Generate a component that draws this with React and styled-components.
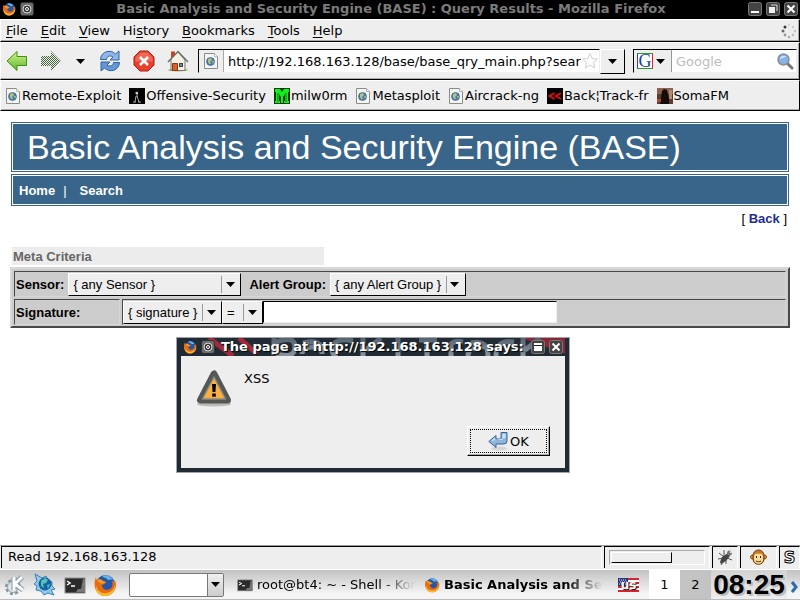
import React, { useState } from "react";
import styled, { createGlobalStyle } from "styled-components";

const menus = [
  { pre: "", key: "F", post: "ile" },
  { pre: "", key: "E", post: "dit" },
  { pre: "", key: "V", post: "iew" },
  { pre: "Hi", key: "s", post: "tory" },
  { pre: "", key: "B", post: "ookmarks" },
  { pre: "", key: "T", post: "ools" },
  { pre: "", key: "H", post: "elp" },
];

const PageIcon = () => (
  <svg width="16" height="16" viewBox="0 0 16 16">
    <path d="M1.5 .5h10l3 3v12h-13z" fill="#f4f5f2" stroke="#8a8d86" />
    <path d="M11.5 .5v3h3" fill="#fff" stroke="#b5b7b2" />
    <circle cx="7.5" cy="8.5" r="4" fill="#4a79b8" stroke="#315a91" strokeWidth=".6" />
    <path d="M5 6l3-1 1 2-2 2 1 2-2 0-1-2zM9 8l2 0-1 3z" fill="#b5c66a" />
  </svg>
);

const OffsecIcon = () => (
  <svg width="16" height="16" viewBox="0 0 16 16">
    <rect width="16" height="16" fill="#000" />
    <path d="M8 4v5M6 5h3M7 8l-1 6M8 8l2 6M4 14h3M9 14h3" stroke="#aaa" fill="none" />
    <circle cx="8" cy="5" r="1.2" fill="#ccc" />
  </svg>
);

const MilwormIcon = () => (
  <svg width="16" height="16" viewBox="0 0 16 16">
    <rect width="16" height="16" fill="#053a05" />
    <path d="M1 1h5l2 3 2-3h5v3h-1v9h1v2h-5v-2h1V6L9 9v6H7V9L5 6v7h1v2H1v-2h1V4H1z" fill="#12f01c" />
    <path d="M4 5v9M12 5v9" stroke="#0b7d10" />
  </svg>
);

const BacktrackIcon = () => (
  <svg width="16" height="16" viewBox="0 0 16 16">
    <rect width="16" height="16" fill="#000" />
    <path d="M7.5 5L2.5 8l5 3M14 5L9 8l5 3" fill="none" stroke="#e30b12" strokeWidth="2" />
  </svg>
);

const SomaIcon = () => (
  <svg width="16" height="16" viewBox="0 0 16 16">
    <rect width="16" height="16" fill="#5b3a30" />
    <rect width="16" height="6" fill="#8d6252" />
    <rect x="12" y="2" width="3" height="9" fill="#b08a72" />
    <path d="M5 3l2-2 3 1 1 4 1 4v6H3l1-6z" fill="#150c0a" />
    <rect x="0" y="11" width="4" height="3" fill="#a3512d" />
  </svg>
);

const bookmarks = [
  { name: "Remote-Exploit", Icon: PageIcon },
  { name: "Offensive-Security", Icon: OffsecIcon },
  { name: "milw0rm", Icon: MilwormIcon },
  { name: "Metasploit", Icon: PageIcon },
  { name: "Aircrack-ng", Icon: PageIcon },
  { name: "Back¦Track-fr", Icon: BacktrackIcon },
  { name: "SomaFM", Icon: SomaIcon },
];

const FirefoxIcon = ({ size = 16 }) => (
  <svg width={size} height={size} viewBox="0 0 24 24">
    <circle cx="12.5" cy="11.5" r="9.5" fill="#2457a6" />
    <path d="M9 3c4-2 9 0 11 4-2-1-3 0-5 0-1-2-4-2-6-4z" fill="#69b5ea" />
    <path d="M3 4c0 2 1 3 1 3 2-1 4-1 6 1l3 1c0 2-3 2-4 3 0 4 4 6 8 4 3-2 3-5 2-8 3 1 3 0 3-1 3 7-1 16-10 16C4 23-1 14 3 4z" fill="#e66b12" />
    <path d="M3 12c1 6 6 9 11 8 4-1 7-3 8-8 1 6-4 11-10 11C6 23 2 18 3 12z" fill="#f8b92c" />
    <path d="M4 7c2-1 4-1 6 1l3 1c-1 1-3 1-4 2-2-1-4-2-5-4z" fill="#f39a26" />
  </svg>
);

const PinIcon = () => (
  <svg width="14" height="14" viewBox="0 0 14 14">
    <rect x=".5" y=".5" width="13" height="13" rx="2" fill="#6b6b6b" stroke="#333" />
    <circle cx="7" cy="7" r="4" fill="#333" stroke="#ddd" />
    <circle cx="7" cy="7" r="1.5" fill="none" stroke="#fff" />
  </svg>
);

const WindowIcon = ({ kind }) => (
  <svg width="14" height="14" viewBox="0 0 14 14">
    <rect x=".5" y=".5" width="13" height="13" rx="2" fill="#444" stroke="#777" />
    {kind === "min" && <path d="M3 10h8" stroke="#fff" strokeWidth="2" />}
    {kind === "max" && (
      <>
        <path d="M5 3h6v6" fill="none" stroke="#ddd" />
        <rect x="3" y="5" width="6" height="6" fill="#eee" />
      </>
    )}
    {kind === "shade" && (
      <>
        <rect x="3" y="3" width="8" height="8" fill="#fff" />
        <path d="M3 5.5h8" stroke="#222" />
      </>
    )}
    {kind === "close" && <path d="M3.500 3.500l7 7M10.500 3.500l-7 7" stroke="#fff" strokeWidth="2" />}
  </svg>
);

const Throbber = () => (
  <svg width="16" height="16" viewBox="0 0 16 16">
    <circle cx="4" cy="4" r="1.5" fill="#333" />
    <circle cx="2" cy="8" r="1.5" fill="#666" />
    <circle cx="4" cy="12" r="1.4" fill="#999" />
    <circle cx="8" cy="14" r="1.2" fill="#aaa" />
    <circle cx="12" cy="12" r="1.2" fill="#bbb" />
    <circle cx="14" cy="8" r="1.2" fill="#c4c4c4" />
    <circle cx="12" cy="4" r="1.2" fill="#ccc" />
    <circle cx="8" cy="2" r="1.2" fill="#d4d4d4" />
  </svg>
);

const ArrowIcon = ({ dim }) => (
  <svg width="22" height="22" viewBox="0 0 22 22">
    <defs>
      <linearGradient id="green" x1="0" y1="0" x2="0" y2="1">
        <stop offset="0" stopColor="#d6f58c" />
        <stop offset="1" stopColor="#5cb52c" />
      </linearGradient>
      <pattern id="stipple" width="2" height="2" patternUnits="userSpaceOnUse">
        <rect width="1" height="1" fill="#44663a" />
        <rect x="1" y="1" width="1" height="1" fill="#44663a" />
      </pattern>
    </defs>
    {dim ? (
      <path d="M21 11L11 1v5H1v10h10v5z" fill="url(#stipple)" />
    ) : (
      <path d="M1 11L11 1.500v5h9.500v9H11v5z" fill="url(#green)" stroke="#3f8f12" strokeLinejoin="round" />
    )}
  </svg>
);

const ReloadIcon = () => (
  <svg width="22" height="22" viewBox="0 0 22 22">
    <path d="M1.500 9.500C2 1 12-1 16.500 4l3.500-3v9h-9l3-3C11 5 8 6 7.500 9.500z" fill="#8fb6e4" stroke="#2f62a8" strokeLinejoin="round" />
    <path d="M20.500 12.500c-.5 8.500-10 10.500-15 5.500L2 21v-9h9l-3 3c3 2 6 1 6.500-2.500z" fill="#6496d3" stroke="#2f62a8" strokeLinejoin="round" />
  </svg>
);

const StopIcon = () => (
  <svg width="22" height="22" viewBox="0 0 22 22">
    <path d="M7 1h8l6 6v8l-6 6H7l-6-6V7z" fill="#e8402c" stroke="#a81d16" />
    <path d="M7.500 2.500h7l5 5v4h-17v-4z" fill="#f28371" opacity=".6" />
    <path d="M7 7l8 8M15 7l-8 8" stroke="#fff" strokeWidth="2.500" />
  </svg>
);

const HomeIcon = () => (
  <svg width="22" height="22" viewBox="0 0 22 22">
    <ellipse cx="11" cy="20" rx="10" ry="1.500" fill="#9db96b" />
    <path d="M4 1.500h4v7H4z" fill="#c9431d" />
    <path d="M4 9l7-7 7 8v10.500H4z" fill="#f3f1e6" stroke="#77766c" />
    <path d="M1 12L11 1.500 21 12" fill="none" stroke="#6d716a" strokeWidth="1.500" />
    <path d="M5.500 13.500h5v7h-5z" fill="#d8602c" stroke="#923313" />
    <rect x="12.500" y="13.500" width="3" height="3" fill="#6e8793" stroke="#40474a" />
  </svg>
);

const StarIcon = () => (
  <svg width="18" height="18" viewBox="0 0 18 18">
    <path d="M9 1.500l2.200 5 5.300.5-4 3.500 1.200 5.500L9 13l-4.700 3 1.200-5.500-4-3.500 5.300-.5z" fill="#fff" stroke="#cfcfcf" />
  </svg>
);

const LensIcon = () => (
  <svg width="17" height="17" viewBox="0 0 17 17">
    <path d="M10 10l5 5" stroke="#777" strokeWidth="3" strokeLinecap="round" />
    <circle cx="6.500" cy="6.500" r="5.500" fill="#86b3e6" stroke="#8b8f94" strokeWidth="1.500" />
    <path d="M3 6c0-3 5-4 6-2-2 0-4 1-6 2z" fill="#dcebfa" />
  </svg>
);

const Caret = () => (
  <svg width="9" height="5" viewBox="0 0 9 5">
    <path d="M0 0h9L4.500 5z" fill="#000" />
  </svg>
);

const WarningIcon = () => (
  <svg width="38" height="38" viewBox="0 0 38 38">
    <ellipse cx="19" cy="35" rx="17" ry="2.500" fill="#bbb" />
    <path d="M19 5L5.500 31h27z" fill="#555753" stroke="#555753" strokeWidth="7" strokeLinejoin="round" />
    <path d="M19 8L7.500 30h23z" fill="#fcaf3e" stroke="#888a85" strokeWidth="1.500" strokeLinejoin="round" />
    <path d="M17 15h4l-.6 8h-2.800z" fill="#000" />
    <rect x="17.200" y="24.500" width="3.600" height="3.200" fill="#000" />
  </svg>
);

const EnterIcon = () => (
  <svg width="20" height="20" viewBox="0 0 20 20">
    <ellipse cx="11" cy="17.500" rx="8" ry="2" fill="#d6d6d6" />
    <path d="M.8 10.500L8 4.500v3.500h5V1.500h6V10q0 3-3 3H8v3.500z" fill="#8db5de" stroke="#37669d" strokeLinejoin="round" />
    <path d="M3 10l4-3.500V9h7.500V3h3v4z" fill="#d3e4f5" />
  </svg>
);

const KMenuIcon = () => (
  <svg width="22" height="22" viewBox="0 0 22 22">
    <circle cx="9" cy="13" r="6.500" fill="#eef1f4" stroke="#8a959f" strokeWidth="3" strokeDasharray="3 2" />
    <circle cx="9" cy="13" r="5.500" fill="#dfe5ea" stroke="#97a2ab" />
    <path d="M10 3v13M18 3l-7 7 8 6" fill="none" stroke="#8794a0" strokeWidth="5" />
    <path d="M10 3v13M18 3l-7 7 8 6" fill="none" stroke="#fff" strokeWidth="3" />
  </svg>
);

const KonquerorIcon = () => (
  <svg width="24" height="24" viewBox="0 0 24 24">
    <path d="M2 1l7 4 4-2 2 4 4 2 0 4 3 3-4 1 3 5-6-2-4 2-3-4-5-1 1-4-3-2 3-3z" fill="#8fcbe9" stroke="#3b7fae" />
    <circle cx="12" cy="11" r="6.500" fill="#1762a6" />
    <path d="M8 8l4-3 3 2-2 3-3 1 1 4-3-2zM14 12l3-1-2 5z" fill="#52c6b1" />
  </svg>
);

const TerminalIcon = ({ size = 16 }) => (
  <svg width={size} height={size} viewBox="0 0 22 22">
    <rect x="1" y="4" width="20" height="15" fill="#2b2b2b" stroke="#8e8e8e" />
    <path d="M12 18l2-3h3l2-10h2v13z" fill="#777" />
    <path d="M3 7l3 2-3 2M7 12h4" fill="none" stroke="#fff" strokeWidth="1.500" />
  </svg>
);

const BugIcon = () => (
  <svg width="17" height="17" viewBox="0 0 17 17">
    <path d="M2 4l5 4M7 1v6M1 10l6-1M4 16l4-6M9 15l0-5M15 11l-5-2" stroke="#555" />
    <path d="M3 13l2-5 6-4 2 3-4 5-5 3z" fill="#444" />
    <circle cx="12.500" cy="4" r="2.500" fill="#777" />
    <circle cx="14" cy="3" r="1.200" fill="#ddd" />
  </svg>
);

const MonkeyIcon = () => (
  <svg width="17" height="17" viewBox="0 0 17 17">
    <circle cx="2.500" cy="8" r="2" fill="#eda23c" stroke="#8a4d12" />
    <circle cx="14.500" cy="8" r="2" fill="#eda23c" stroke="#8a4d12" />
    <path d="M3 7c0-8 11-8 11 0v3c0 7-11 7-11 0z" fill="#c97a25" stroke="#6b3a0b" />
    <path d="M4 7c1-3 4-2 4.500-2S12 4 13 7v4c-1 5-8 5-9 0z" fill="#fbdc93" />
    <path d="M6.500 7v2M10.500 7v2M6 12c2 1 3 1 5 0" fill="none" stroke="#3b2208" />
  </svg>
);

const FlagIcon = () => (
  <svg width="21" height="14" viewBox="0 0 21 14">
    <rect width="21" height="14" fill="#fff" />
    <path d="M0 1h21M0 5h21M0 9h21M0 13h21" stroke="#d8232e" strokeWidth="2" />
    <rect width="10" height="8" fill="#27357e" />
    <path d="M1 2h8M2 4h7M1 6h8" stroke="#fff" strokeDasharray="1 1" />
  </svg>
);

const TitleArt = () => (
  <Art viewBox="0 0 390 18" preserveAspectRatio="xMinYMin slice" aria-hidden="true">
    <defs>
      <linearGradient id="steel" x1="0" y1="0" x2="0" y2="18" gradientUnits="userSpaceOnUse">
        <stop offset="0" stopColor="#55626f" />
        <stop offset="1" stopColor="#8994a0" />
      </linearGradient>
    </defs>
    <path d="M28 0l24 18M58 0l18 16" stroke="#a32b39" strokeWidth="5" />
    <path d="M340 0h50v18z" fill="#8b2637" />
    <g fill="none" stroke="url(#steel)" strokeWidth="5">
      <path d="M93 0v17M95 4q19-7 19 5t-19 7M122 5q19-6 19 11M141 9q-20-2-20 7M172 3q-19-5-21 9 1 6 6 6M182 0v18M200 0l-15 12M217 0v18M246 0v18M238 2h18M270 18V6q4-4 12-2M290 5q17-4 17 13M306 9q-19-2-19 9M333 4q-18-3-18 14M342 0v18M359 0l-15 12" />
    </g>
  </Art>
);

const Choice = ({ id, label, text, wide }) => (
  <SelectWrap $wide={wide}>
    <Select id={id} aria-label={label}>
      <option>{text}</option>
    </Select>
    <SelectArrow>
      <Caret />
    </SelectArrow>
  </SelectWrap>
);

const App = () => {
  const [url, setUrl] = useState("http://192.168.163.128/base/base_qry_main.php?sear");
  const [signature, setSignature] = useState("");
  const [desktop, setDesktop] = useState("1");

  return (
    <Screen>
      <GlobalStyle />
      <TitleBar>
        <FirefoxIcon size={14} />
        <PinIcon />
        <WindowTitle>
          Basic Analysis and Security Engine (BASE) : Query Results - Mozilla Firefox
        </WindowTitle>
        <IconButton aria-label="Minimize"><WindowIcon kind="min" /></IconButton>
        <IconButton aria-label="Maximize"><WindowIcon kind="max" /></IconButton>
        <IconButton aria-label="Close"><WindowIcon kind="close" /></IconButton>
      </TitleBar>

      <MenuBar>
        {menus.map(({ pre, key, post }) => (
          <MenuItem key={pre + key + post}>
            {pre}
            <u>{key}</u>
            {post}
          </MenuItem>
        ))}
        <Spacer />
        <Throbber />
      </MenuBar>

      <NavBar>
        <NavButtons>
          <IconButton aria-label="Back"><ArrowIcon /></IconButton>
          <IconButton aria-label="Forward"><ArrowIcon dim /></IconButton>
          <IconButton aria-label="Recent pages"><Caret /></IconButton>
          <IconButton aria-label="Reload"><ReloadIcon /></IconButton>
          <IconButton aria-label="Stop"><StopIcon /></IconButton>
          <IconButton aria-label="Home"><HomeIcon /></IconButton>
        </NavButtons>
        <AddressBox>
          <SiteIcon><PageIcon /></SiteIcon>
          <FieldInput aria-label="Address" value={url} onChange={(e) => setUrl(e.target.value)} />
          <StarIcon />
        </AddressBox>
        <DropButton aria-label="Show history"><Caret /></DropButton>
        <SearchBox>
          <EngineButton aria-label="Search engine">
            <EngineLogo>G</EngineLogo>
            <Caret />
          </EngineButton>
          <FieldInput aria-label="Search" placeholder="Google" />
          <LensIcon />
        </SearchBox>
      </NavBar>

      <BookmarkBar>
        {bookmarks.map(({ name, Icon }) => (
          <Bookmark href="#" key={name}>
            <Icon />
            {name}
          </Bookmark>
        ))}
      </BookmarkBar>

      <Page>
        <Masthead>Basic Analysis and Security Engine (BASE)</Masthead>
        <PageMenu>
          <PageLink href="#">Home</PageLink>
          <span>|</span>
          <PageLink href="#">Search</PageLink>
        </PageMenu>
        <BackRow>
          [ <BackLink href="#">Back</BackLink> ]
        </BackRow>
        <SectionTitle>Meta Criteria</SectionTitle>
        <Criteria>
          <Cell $full>
            <Label htmlFor="sensor">Sensor:</Label>
            <Choice id="sensor" text="{ any Sensor }" wide={173} />
            <GroupLabel htmlFor="group">Alert Group:</GroupLabel>
            <Choice id="group" text="{ any Alert Group }" wide={136} />
          </Cell>
          <Cell>
            <Label htmlFor="signature">Signature:</Label>
          </Cell>
          <Cell $tight>
            <Choice label="Signature match" text="{ signature }" wide={99} />
            <Choice label="Signature operator" text="=" wide={41} />
            <SignatureInput
              id="signature"
              value={signature}
              onChange={(e) => setSignature(e.target.value)}
            />
          </Cell>
        </Criteria>

        <Dialog role="alertdialog" aria-label="XSS">
          <DialogTitle>
            <TitleArt />
            <FirefoxIcon size={14} />
            <PinIcon />
            <DialogName>The page at http://192.168.163.128 says:</DialogName>
            <IconButton aria-label="Shade"><WindowIcon kind="shade" /></IconButton>
            <IconButton aria-label="Close dialog"><WindowIcon kind="close" /></IconButton>
          </DialogTitle>
          <DialogBody>
            <Message>
              <WarningIcon />
              <p>XSS</p>
            </Message>
            <OkButton>
              <OkFocus>
                <EnterIcon />
                OK
              </OkFocus>
            </OkButton>
          </DialogBody>
        </Dialog>
      </Page>

      <StatusBar>
        <StatusText>Read 192.168.163.128</StatusText>
        <StatusPanel $wide={106}>
          <Progress><ProgressFill /></Progress>
        </StatusPanel>
        <StatusPanel $wide={26}><BugIcon /></StatusPanel>
        <StatusPanel $wide={37}><MonkeyIcon /></StatusPanel>
        <StatusPanel $wide={21}><ScriptLogo>S</ScriptLogo></StatusPanel>
      </StatusBar>

      <TaskBar>
        <Launchers>
          <IconButton aria-label="K menu"><KMenuIcon /></IconButton>
          <IconButton aria-label="Konqueror"><KonquerorIcon /></IconButton>
          <IconButton aria-label="Terminal"><TerminalIcon size={22} /></IconButton>
          <IconButton aria-label="Firefox"><FirefoxIcon size={24} /></IconButton>
        </Launchers>
        <RunBox>
          <FieldInput aria-label="Run command" />
          <RunArrow aria-label="Command history"><Caret /></RunArrow>
        </RunBox>
        <Task>
          <TerminalIcon />
          <TaskName>root@bt4: ~ - Shell - Kon</TaskName>
        </Task>
        <Task $active>
          <FirefoxIcon />
          <TaskName>Basic Analysis and Se</TaskName>
        </Task>
        <Keyboard>
          <FlagIcon />
          <KeyboardName>us</KeyboardName>
        </Keyboard>
        {["1", "2"].map((n) => (
          <Desktop key={n} $current={desktop === n} onClick={() => setDesktop(n)}>
            {n}
          </Desktop>
        ))}
        <Clock>08:25</Clock>
        <HideButton aria-label="Hide panel">
          <svg width="8" height="12" viewBox="0 0 8 12">
            <path d="M2 1l4 5-4 5" fill="none" stroke="#2b6cab" strokeWidth="3" />
          </svg>
        </HideButton>
      </TaskBar>
    </Screen>
  );
};

const GlobalStyle = createGlobalStyle`
  * { box-sizing: border-box; }
  body {
    margin: 0;
    font-family: "DejaVu Sans", sans-serif;
    font-size: 13px;
    color: #000;
  }
  button, input, select { font: inherit; color: inherit; margin: 0; }
  svg { display: block; flex: none; }
`;

const Screen = styled.div`
  display: flex;
  flex-direction: column;
  min-height: 100vh;
  background: #fff;
  overflow: hidden;
`;

const TitleBar = styled.header`
  display: flex;
  align-items: center;
  gap: 4px;
  height: 19px;
  padding: 0 2px 2px;
  background: #000;
`;

const WindowTitle = styled.h1`
  flex: 1;
  margin: 0;
  font-size: 13px;
  line-height: 16px;
  text-align: center;
  white-space: nowrap;
  color: #7b7b7b;
`;

const IconButton = styled.button`
  display: flex;
  padding: 0;
  border: none;
  background: transparent;
`;

const Toolbar = styled.div`
  display: flex;
  align-items: center;
  background: #eee;
  border-top: 1px solid #fff;
  border-left: 1px solid #fff;
  border-right: 1px solid #000;
  border-bottom: 1px solid #000;
  box-shadow: inset -1px -1px 0 #aaa;
`;

const MenuBar = styled(Toolbar)`
  height: 23px;
  gap: 13px;
  padding: 0 2px 0 5px;
`;

const MenuItem = styled.span`
  line-height: 20px;

  u {
    text-underline-offset: 2px;
  }
`;

const Spacer = styled.div`
  flex: 1;
`;

const NavBar = styled(Toolbar)`
  height: 38px;
  padding: 0 2px 0 5px;
`;

const NavButtons = styled.div`
  display: flex;
  align-items: center;
  gap: 12px;
  margin-right: 9px;

  ${IconButton}:nth-child(3) {
    margin: 0 2px;
  }
`;

const Field = styled.div`
  display: flex;
  align-items: center;
  height: 24px;
  background: #fff;
  border: 1px solid #eee;
  border-top-color: #000;
  border-left-color: #000;
`;

const AddressBox = styled(Field)`
  flex: 1;
`;

const SiteIcon = styled.span`
  display: flex;
  align-items: center;
  height: 100%;
  padding: 0 4px;
  background: #eee;
  border-right: 1px solid #aaa;
`;

const FieldInput = styled.input`
  flex: 1;
  min-width: 0;
  height: 20px;
  padding: 0 0 0 4px;
  border: none;
  outline: none;
  background: transparent;

  &::placeholder {
    color: #bbb;
    opacity: 1;
  }
`;

const DropButton = styled.button`
  display: grid;
  place-items: center;
  width: 25px;
  height: 25px;
  padding: 0;
  background: #eee;
  border: 1px solid #000;
  border-top-color: #fff;
  border-left-color: #fff;
`;

const SearchBox = styled(Field)`
  width: 164px;
  margin-left: 8px;
  padding-right: 2px;
`;

const EngineButton = styled.button`
  display: flex;
  align-items: center;
  gap: 3px;
  height: 100%;
  padding: 0 6px 0 3px;
  background: #eee;
  border: none;
  border-right: 1px solid #999;
`;

const EngineLogo = styled.span`
  width: 16px;
  height: 16px;
  border: 1px solid #2a9d2a;
  border-right-color: #d22;
  border-left-color: #24c;
  background: #fff;
  color: #1b3fa8;
  font-family: "Liberation Serif", serif;
  font-size: 18px;
  line-height: 14px;
`;

const BookmarkBar = styled(Toolbar)`
  height: 31px;
  gap: 8px;
  padding: 0 4px;
  box-shadow: inset 0 -1px 0 #aaa;
`;

const Bookmark = styled.a`
  display: flex;
  align-items: center;
  gap: 1px;
  white-space: nowrap;
  color: #000;
  text-decoration: none;
`;

const Page = styled.main`
  position: relative;
  flex: 1;
  padding: 11px 10px;
  font-family: "Liberation Sans", Arial, sans-serif;
`;

const Masthead = styled.h2`
  margin: 0 1px 2px;
  padding: 0 15px;
  border: 1px solid #386589;
  box-shadow: inset 0 0 0 1px #fff;
  background: #386589;
  color: #fff;
  font-size: 34px;
  font-weight: 400;
  line-height: 48px;
  white-space: nowrap;
`;

const PageMenu = styled.nav`
  display: flex;
  align-items: center;
  gap: 8px;
  height: 32px;
  margin: 0 1px;
  padding: 0 7px;
  border: 1px solid #386589;
  box-shadow: inset 0 0 0 1px #fff;
  background: #386589;
  color: #fff;

  span {
    margin-right: 5px;
  }
`;

const PageLink = styled.a`
  color: #fff;
  font-weight: 700;
  text-decoration: none;
`;

const BackRow = styled.div`
  padding-right: 3px;
  line-height: 26px;
  text-align: right;
`;

const BackLink = styled.a`
  color: #1f2d94;
  font-weight: 700;
  text-decoration: none;
`;

const SectionTitle = styled.h3`
  width: 40%;
  margin: 15px 2px 2px;
  padding: 1px 1px 0;
  background: #ececec;
  color: #666;
  font-size: 13px;
  line-height: 17px;
`;

const Criteria = styled.form`
  display: grid;
  grid-template-columns: 106px 1fr;
  gap: 2px;
  padding: 2px 2px 1px;
  background: #ccc;
  border: 2px solid #484848;
  border-top-color: #d8d8d8;
  border-left-color: #d8d8d8;
`;

const Cell = styled.div`
  display: flex;
  align-items: center;
  grid-column: ${(props) => (props.$full ? "1 / -1" : "auto")};
  height: 26px;
  padding-left: ${(props) => (props.$tight ? 0 : 1)}px;
  border: 1px solid #d6d6d6;
  border-top-color: #484848;
  border-left-color: #484848;
`;

const Label = styled.label`
  margin-right: 4px;
  font-weight: 700;
`;

const GroupLabel = styled(Label)`
  margin-left: 8px;
`;

const SelectWrap = styled.span`
  display: grid;
  width: ${(props) => props.$wide}px;
  height: 23px;
`;

const Select = styled.select`
  grid-area: 1 / 1;
  appearance: none;
  min-width: 0;
  padding: 0 4px;
  border: 1px solid #000;
  border-top-color: #fff;
  border-left-color: #fff;
  border-radius: 0;
  background: #eee;
`;

const SelectArrow = styled.span`
  grid-area: 1 / 1;
  display: grid;
  place-items: center;
  justify-self: end;
  align-self: center;
  width: 17px;
  height: 17px;
  margin-right: 3px;
  border-left: 1px solid #999;
  pointer-events: none;
`;

const SignatureInput = styled.input`
  width: 294px;
  height: 22px;
  border: 1px solid #eee;
  border-top-color: #000;
  border-left-color: #000;
  background: #fff;
`;

const Dialog = styled.section`
  position: absolute;
  top: 226px;
  left: 176px;
  width: 394px;
  padding: 0 4px 4px;
  background: #202b36;
  border: 1px solid #a3a6a9;
  font-family: "DejaVu Sans", sans-serif;
`;

const DialogTitle = styled.div`
  position: relative;
  display: flex;
  align-items: center;
  gap: 4px;
  height: 18px;
  padding: 0 2px 1px;
  overflow: hidden;

  > :not(:first-child) {
    z-index: 1;
  }
`;

const Art = styled.svg`
  position: absolute;
  inset: 0;
  width: 100%;
  height: 100%;
`;

const DialogName = styled.strong`
  flex: 1;
  padding-left: 2px;
  color: #fff;
  text-shadow: 1px 1px 1px #000;
  line-height: 16px;
  white-space: nowrap;
`;

const DialogBody = styled.div`
  display: flex;
  flex-direction: column;
  justify-content: space-between;
  min-height: 112px;
  padding: 13px 15px 12px 14px;
  background: #eee;
`;

const Message = styled.div`
  display: flex;
  gap: 11px;

  p {
    margin: 0;
    line-height: 20px;
  }
`;

const OkButton = styled.button`
  align-self: flex-end;
  width: 83px;
  height: 30px;
  padding: 2px;
  background: #eee;
  border: 1px solid #000;
  border-top-color: #fff;
  border-left-color: #fff;
  box-shadow: inset -1px -1px 0 #aaa;
`;

const OkFocus = styled.span`
  display: flex;
  align-items: center;
  justify-content: center;
  gap: 2px;
  height: 24px;
  border: 1px dotted #000;
`;

const StatusBar = styled.footer`
  display: flex;
  gap: 2px;
  height: 25px;
  padding-bottom: 1px;
  background: #eee;
  border-top: 1px solid #999;
  border-bottom: 1px solid #fff;
`;

const StatusPanel = styled.div`
  display: grid;
  place-items: center;
  width: ${(props) => props.$wide}px;
  border-top: 1px solid #000;
  border-left: 1px solid #000;
  border-right: 1px solid #fff;
`;

const StatusText = styled.div`
  flex: 1;
  margin-left: 1px;
  padding-left: 6px;
  line-height: 20px;
  border-top: 1px solid #000;
  border-left: 1px solid #000;
  border-right: 1px solid #fff;
`;

const Progress = styled.div`
  width: 96px;
  height: 15px;
  padding: 1px;
  border: 1px solid #fff;
  border-top-color: #aaa;
  border-left-color: #aaa;
`;

const ProgressFill = styled.div`
  width: 66%;
  height: 11px;
  background: #eee;
  border: 1px solid #000;
  border-top-color: #fff;
  border-left-color: #fff;
`;

const ScriptLogo = styled.span`
  color: #fff;
  font-size: 16px;
  font-weight: 700;
  line-height: 18px;
  -webkit-text-stroke: 1px #000;
`;

const TaskBar = styled.div`
  display: flex;
  align-items: center;
  height: 30px;
  padding-left: 4px;
  background: linear-gradient(#c2c2c2, #f4f4f4 80%);
  border-bottom: 1px solid #bbb;
`;

const Launchers = styled.div`
  display: flex;
  align-items: center;
  gap: 7px;
`;

const RunBox = styled.div`
  display: flex;
  width: 95px;
  height: 24px;
  margin: 0 13px 0 12px;
  border: 1px solid #777;
  border-radius: 2px;
  background: #fff;
`;

const RunArrow = styled.button`
  display: grid;
  place-items: center;
  width: 16px;
  padding: 0;
  border: none;
  border-left: 1px solid #777;
  background: linear-gradient(#f0f0f0, #ccc);
`;

const Task = styled.button`
  display: flex;
  align-items: center;
  flex: 1;
  gap: 4px;
  min-width: 0;
  margin-right: 5px;
  padding: 0;
  border: none;
  background: transparent;
  font-weight: ${(props) => (props.$active ? 700 : 400)};
`;

const TaskName = styled.span`
  flex: 1;
  overflow: hidden;
  text-align: left;
  white-space: nowrap;
  mask-image: linear-gradient(to right, #000 75%, transparent 98%);
`;

const Keyboard = styled.div`
  display: grid;
  place-items: center;
  margin: 0 10px 0 7px;

  > * {
    grid-area: 1 / 1;
  }
`;

const KeyboardName = styled.span`
  color: #fff;
  font-size: 12px;
  font-weight: 700;
  line-height: 14px;
  text-shadow: 1px 1px 1px #000;
`;

const Desktop = styled.button`
  align-self: stretch;
  width: 31px;
  padding: 0;
  border: none;
  background: ${(props) => (props.$current ? "#fff" : "#c3c3c3")};
`;

const Clock = styled.time`
  align-self: stretch;
  width: 76px;
  background: linear-gradient(#d2d2d2, #eee);
  font-family: "Liberation Sans Narrow", "Liberation Sans", sans-serif;
  font-size: 28px;
  font-weight: 700;
  line-height: 30px;
  text-align: center;
  text-shadow: 2px 2px 0 #bbb;
`;

const HideButton = styled(IconButton)`
  padding: 4px 2px 0 3px;
`;

export default App;
